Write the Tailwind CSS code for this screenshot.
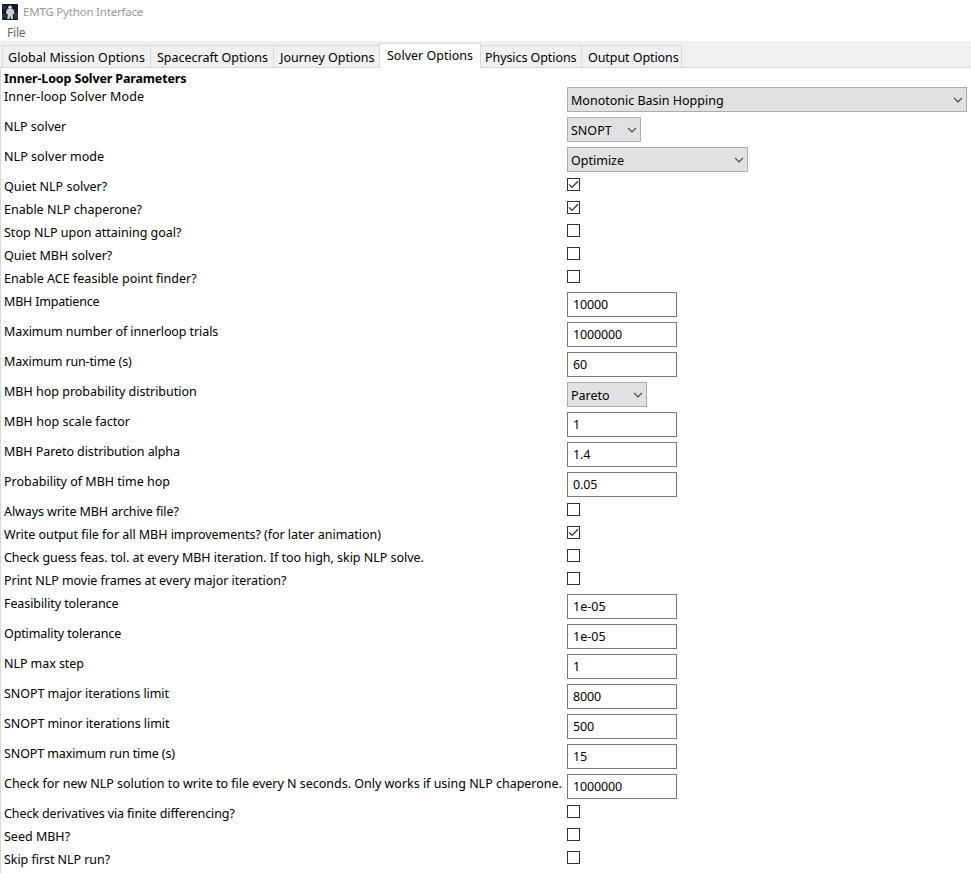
<!DOCTYPE html>
<html lang="en">
<head>
<meta charset="utf-8">
<title>EMTG Python Interface</title>
<script src="https://cdn.jsdelivr.net/npm/@tailwindcss/browser@4"></script>
</head>
<body class="w-[971px] h-[873px] overflow-hidden bg-white text-black font-['Noto_Sans',sans-serif] text-[12.5px] leading-[20px] whitespace-nowrap">
<svg class="hidden">
  <symbol id="chev" viewBox="0 0 10 6"><path d="M1 0.8 5 4.8 9 0.8" fill="none" stroke="#444" stroke-width="1.2"/></symbol>
  <symbol id="tick" viewBox="0 0 11 11"><path d="M1 5.4 4 8.4 10 2.2" fill="none" stroke="#333" stroke-width="1.3"/></symbol>
</svg>
<div class="flex flex-col h-full">
  <header class="h-[23px] shrink-0 flex items-center pl-[2px] gap-[5px] text-[#999] text-[11.5px] tracking-[-0.2px]">
    <svg class="w-4 h-4" viewBox="0 0 16 16"><rect width="16" height="16" rx="1" fill="#141a28"/><path d="M0 10h4v4H0zM12 9h4v5h-4zM1 2h3v3H1z" fill="#2b3850"/><circle cx="8" cy="3.2" r="1.7" fill="#e3e6ea"/><path d="M5.4 4.8h5.4l1.6 2.6-.5 2.8-1.2-.2.4 5H8.9l-.6-3.6-.8 3.6H5.2l.6-5-1.8-.3.3-2.7z" fill="#ccd1d8"/></svg>
    <span>EMTG Python Interface</span>
  </header>
  <nav class="h-[18px] shrink-0 pl-[7px] text-[#666] text-[12px] tracking-[-0.2px]">File</nav>
  <div class="h-[27px] shrink-0 flex items-end bg-[#f0f0f0] border-b border-[#d9d9d9] pl-[2px]">
    <div class="h-[22px] w-[149px] border border-b-0 border-[#d9d9d9] pl-[5px] pt-[2px] tracking-[0.05px]"><span>Global Mission Options</span></div>
    <div class="h-[22px] w-[123px] border-t border-r border-[#d9d9d9] pl-[6px] pt-[2px]"><span>Spacecraft Options</span></div>
    <div class="h-[22px] w-[105px] border-t border-[#d9d9d9] pl-[6px] pt-[2px]"><span>Journey Options</span></div>
    <div class="h-[25px] w-[102px] -mb-px bg-white border border-b-0 border-[#d9d9d9] pl-[7px] pt-[2px]"><span>Solver Options</span></div>
    <div class="h-[22px] w-[101px] border-t border-r border-[#d9d9d9] pl-[4px] pt-[2px] tracking-[-0.07px]"><span>Physics Options</span></div>
    <div class="h-[22px] w-[100px] border-t border-r border-[#d9d9d9] pl-[6px] pt-[2px] tracking-[-0.07px]"><span>Output Options</span></div>
  </div>
  <main class="grow border-l border-[#d9d9d9] pl-[3px]">
    <h1 class="h-[19px] pt-px font-bold tracking-[-0.14px]">Inner-Loop Solver Parameters</h1>
    <div class="grid grid-cols-[563px_400px] items-start">
      <label class="h-[30px] tracking-[0.08px]">Inner-loop Solver Mode</label><div class="w-[400px] h-[25px] bg-[#e1e1e1] border border-[#adadad] pl-[3px] pr-[3px] pt-[3px] flex justify-between"><span>Monotonic Basin Hopping</span><svg class="w-[10px] h-[6px] mt-[6px]"><use href="#chev"/></svg></div>
      <label class="h-[30px]">NLP solver</label><div class="w-[74px] h-[25px] bg-[#e1e1e1] border border-[#adadad] pl-[3px] pr-[3px] pt-[3px] flex justify-between"><span>SNOPT</span><svg class="w-[10px] h-[6px] mt-[6px]"><use href="#chev"/></svg></div>
      <label class="h-[30px] tracking-[0.05px]">NLP solver mode</label><div class="w-[181px] h-[25px] bg-[#e1e1e1] border border-[#adadad] pl-[3px] pr-[3px] pt-[3px] flex justify-between"><span>Optimize</span><svg class="w-[10px] h-[6px] mt-[6px]"><use href="#chev"/></svg></div>
      <label class="h-[23px]">Quiet NLP solver?</label><div class="size-[13px] mt-px border border-[#333]"><svg class="size-[11px]"><use href="#tick"/></svg></div>
      <label class="h-[23px]">Enable NLP chaperone?</label><div class="size-[13px] mt-px border border-[#333]"><svg class="size-[11px]"><use href="#tick"/></svg></div>
      <label class="h-[23px]">Stop NLP upon attaining goal?</label><div class="size-[13px] mt-px border border-[#333]"></div>
      <label class="h-[23px]">Quiet MBH solver?</label><div class="size-[13px] mt-px border border-[#333]"></div>
      <label class="h-[23px] tracking-[0.02px]">Enable ACE feasible point finder?</label><div class="size-[13px] mt-px border border-[#333]"></div>
      <label class="h-[30px] tracking-[-0.2px]">MBH Impatience</label><div class="w-[110px] h-[25px] border border-[#7a7a7a] pl-[5px] pt-[2px] tracking-[-0.13px]">10000</div>
      <label class="h-[30px] tracking-[-0.09px]">Maximum number of innerloop trials</label><div class="w-[110px] h-[25px] border border-[#7a7a7a] pl-[5px] pt-[2px] tracking-[-0.13px]">1000000</div>
      <label class="h-[30px] tracking-[-0.14px]">Maximum run-time (s)</label><div class="w-[110px] h-[25px] border border-[#7a7a7a] pl-[5px] pt-[2px] tracking-[-0.13px]">60</div>
      <label class="h-[30px]">MBH hop probability distribution</label><div class="w-[80px] h-[25px] bg-[#e1e1e1] border border-[#adadad] pl-[3px] pr-[3px] pt-[3px] flex justify-between"><span>Pareto</span><svg class="w-[10px] h-[6px] mt-[6px]"><use href="#chev"/></svg></div>
      <label class="h-[30px] tracking-[0.04px]">MBH hop scale factor</label><div class="w-[110px] h-[25px] border border-[#7a7a7a] pl-[5px] pt-[2px]">1</div>
      <label class="h-[30px] tracking-[-0.07px]">MBH Pareto distribution alpha</label><div class="w-[110px] h-[25px] border border-[#7a7a7a] pl-[5px] pt-[2px] tracking-[-0.13px]">1.4</div>
      <label class="h-[30px]">Probability of MBH time hop</label><div class="w-[110px] h-[25px] border border-[#7a7a7a] pl-[5px] pt-[2px] tracking-[-0.13px]">0.05</div>
      <label class="h-[23px] tracking-[-0.09px]">Always write MBH archive file?</label><div class="size-[13px] mt-px border border-[#333]"></div>
      <label class="h-[23px] tracking-[-0.035px]">Write output file for all MBH improvements? (for later animation)</label><div class="size-[13px] mt-px border border-[#333]"><svg class="size-[11px]"><use href="#tick"/></svg></div>
      <label class="h-[23px] tracking-[-0.03px]">Check guess feas. tol. at every MBH iteration. If too high, skip NLP solve.</label><div class="size-[13px] mt-px border border-[#333]"></div>
      <label class="h-[23px] tracking-[-0.04px]">Print NLP movie frames at every major iteration?</label><div class="size-[13px] mt-px border border-[#333]"></div>
      <label class="h-[30px] tracking-[-0.09px]">Feasibility tolerance</label><div class="w-[110px] h-[25px] border border-[#7a7a7a] pl-[5px] pt-[2px]">1e-05</div>
      <label class="h-[30px] tracking-[-0.12px]">Optimality tolerance</label><div class="w-[110px] h-[25px] border border-[#7a7a7a] pl-[5px] pt-[2px]">1e-05</div>
      <label class="h-[30px] tracking-[-0.06px]">NLP max step</label><div class="w-[110px] h-[25px] border border-[#7a7a7a] pl-[5px] pt-[2px]">1</div>
      <label class="h-[30px] tracking-[-0.06px]">SNOPT major iterations limit</label><div class="w-[110px] h-[25px] border border-[#7a7a7a] pl-[5px] pt-[2px] tracking-[-0.13px]">8000</div>
      <label class="h-[30px] tracking-[-0.07px]">SNOPT minor iterations limit</label><div class="w-[110px] h-[25px] border border-[#7a7a7a] pl-[5px] pt-[2px] tracking-[-0.13px]">500</div>
      <label class="h-[30px] tracking-[-0.11px]">SNOPT maximum run time (s)</label><div class="w-[110px] h-[25px] border border-[#7a7a7a] pl-[5px] pt-[2px] tracking-[-0.13px]">15</div>
      <label class="h-[30px] tracking-[-0.015px]">Check for new NLP solution to write to file every N seconds. Only works if using NLP chaperone.</label><div class="w-[110px] h-[25px] border border-[#7a7a7a] pl-[5px] pt-[2px] tracking-[-0.13px]">1000000</div>
      <label class="h-[23px] tracking-[-0.1px]">Check derivatives via finite differencing?</label><div class="size-[13px] mt-px border border-[#333]"></div>
      <label class="h-[23px]">Seed MBH?</label><div class="size-[13px] mt-px border border-[#333]"></div>
      <label class="h-[23px] tracking-[-0.05px]">Skip first NLP run?</label><div class="size-[13px] mt-px border border-[#333]"></div>
    </div>
  </main>
</div>
</body>
</html>
